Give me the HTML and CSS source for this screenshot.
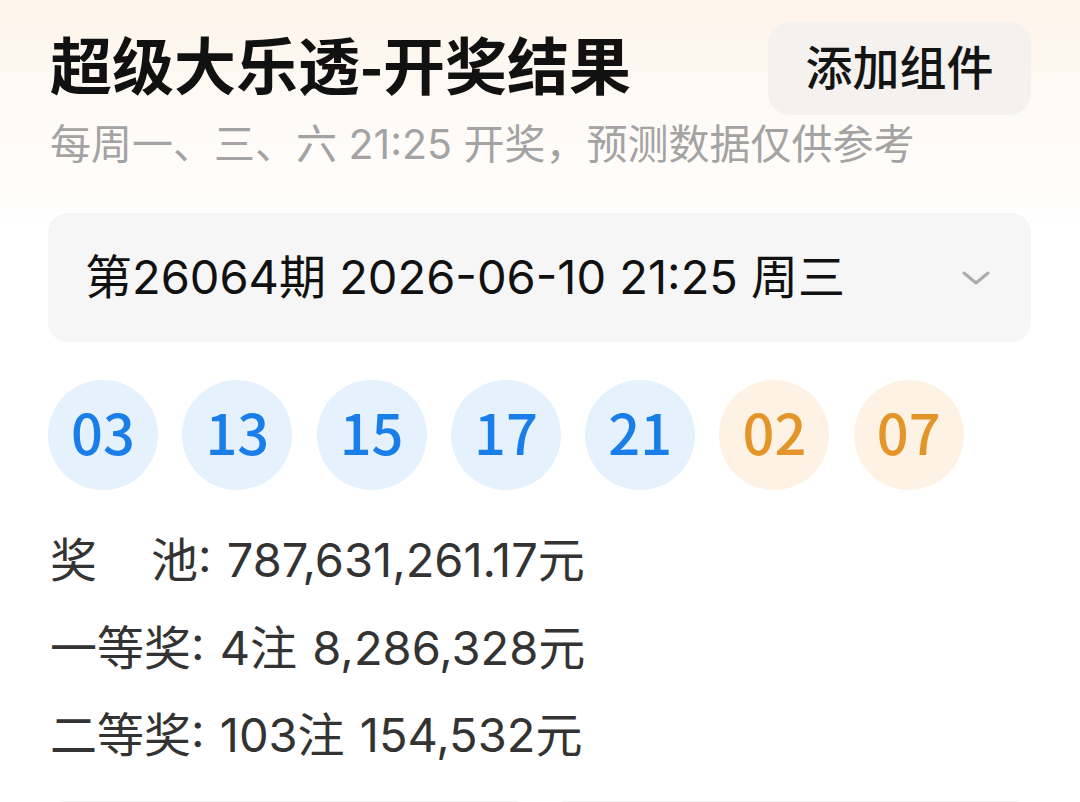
FILE: index.html
```html
<!DOCTYPE html>
<html lang="zh-CN">
<head>
<meta charset="utf-8">
<title>超级大乐透-开奖结果</title>
<link rel="stylesheet" href="styles.css">
</head>
<body>
<div class="page">
  <header class="header">
    <h1 class="title">超级大乐透-开奖结果</h1>
    <button class="add-btn"><span class="add-text">添加组件</span></button>
  </header>
  <p class="subtitle">每周一、三、六 21:25 开奖，预测数据仅供参考</p>

  <div class="select">
    <span class="select-text">第26064期 2026-06-10 21:25 周三</span>
    <svg class="chevron" width="28" height="16" viewBox="0 0 28 16" aria-hidden="true">
      <path d="M2 3 L14 13 L26 3" fill="none" stroke="#ababab" stroke-width="3" stroke-linecap="round" stroke-linejoin="round"/>
    </svg>
  </div>

  <div class="balls">
    <span class="ball front">03</span>
    <span class="ball front">13</span>
    <span class="ball front">15</span>
    <span class="ball front">17</span>
    <span class="ball front">21</span>
    <span class="ball back">02</span>
    <span class="ball back">07</span>
  </div>

  <div class="prizes">
    <div class="prize"><span class="label"><span class="pool-first">奖</span>池</span>: 787,631,261.17元</div>
    <div class="prize"><span class="label">一等奖</span>: 4注 8,286,328元</div>
    <div class="prize"><span class="label">二等奖</span>: 103注 154,532元</div>
  </div>

  <div class="cards">
    <div class="card"></div>
    <div class="card"></div>
  </div>
</div>
</body>
</html>
```

FILE: styles.css
```css
* { box-sizing: border-box; }

html, body {
  margin: 0;
  padding: 0;
}

body {
  width: 1080px;
  height: 802px;
  overflow: hidden;
  background: linear-gradient(180deg, #fdf4ea 0px, #fef9f4 90px, #fffdfb 180px, #ffffff 230px);
  font-family: "Inter", "Noto Sans CJK SC", sans-serif;
  color: #111;
}

.page {
  padding: 22px 49px 0 48px;
}

.header {
  display: flex;
  justify-content: space-between;
  align-items: center;
  height: 93px;
}

.title {
  margin: 0 0 12px 2px;
  font-family: "Noto Sans CJK SC", sans-serif;
  font-size: 62px;
  font-weight: 700;
  line-height: 1;
  color: #111;
}

.add-btn {
  height: 93px;
  width: 263px;
  border: none;
  border-radius: 22px;
  background: #f4f1ee;
  font-family: "Noto Sans CJK SC", sans-serif;
  font-size: 47px;
  font-weight: 500;
  color: #141414;
  padding: 0 0 8px 0;
  line-height: 1;
}

.add-text {
  display: inline-block;
}

.subtitle {
  margin: 5px 0 0 2px;
  font-size: 41px;
  line-height: 48px;
  color: #a3a3a3;
  font-weight: 400;
  white-space: nowrap;
}

.select {
  margin-top: 45px;
  height: 129px;
  border-radius: 20px;
  background: #f6f6f6;
  display: flex;
  align-items: center;
  justify-content: space-between;
  padding: 0 41px 0 37px;
}

.select-text {
  font-size: 47px;
  line-height: 1;
  color: #111;
  font-weight: 400;
  margin-bottom: 2px;
  white-space: nowrap;
}

.chevron {
  display: block;
  flex: none;
}

.balls {
  margin-top: 38px;
  display: flex;
  gap: 24.3px;
}

.ball {
  width: 110px;
  height: 110px;
  border-radius: 50%;
  display: flex;
  align-items: center;
  justify-content: center;
  font-family: "Noto Sans CJK SC", sans-serif;
  font-size: 56px;
  font-weight: 500;
  line-height: 1;
  padding-bottom: 9px;
}

.ball.front {
  background: #e5f1fd;
  color: #1a7ee8;
}

.ball.back {
  background: #fdf2e4;
  color: #e4952a;
}

.prizes {
  margin-top: 26px;
  padding-left: 2px;
}

.prize {
  font-size: 47px;
  line-height: 87.5px;
  height: 87.5px;
  color: #333;
  white-space: nowrap;
  word-spacing: 2px;
}

.label {
  display: inline-block;
}

.pool-first {
  display: inline-block;
  margin-right: 54px;
}

.cards {
  margin-top: 22px;
  display: flex;
  gap: 20px;
}

.card {
  flex: 1;
  height: 120px;
  border-radius: 16px;
  background: #fdfdfd;
  border-top: 2px solid #f1f1f1;
}
```
